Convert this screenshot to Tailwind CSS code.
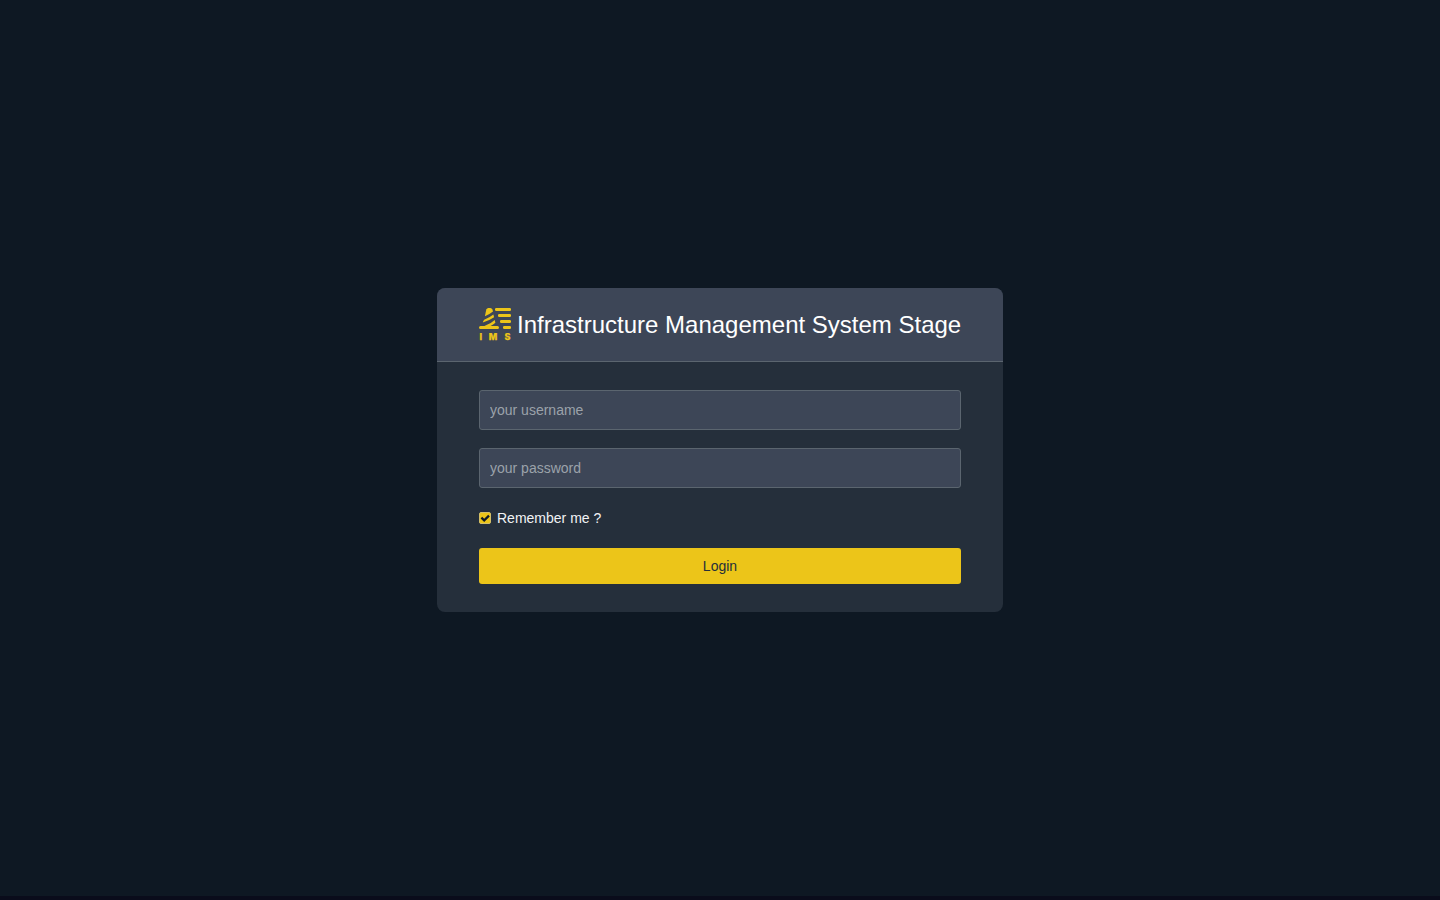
<!DOCTYPE html>
<html lang="en">
<head>
<meta charset="utf-8">
<title>Infrastructure Management System Stage</title>
<script src="https://cdn.jsdelivr.net/npm/@tailwindcss/browser@4"></script>
</head>
<body class="h-screen overflow-hidden bg-[#0a0c1b] font-['Liberation_Sans',Arial,sans-serif] text-sm text-white">
<div class="flex h-[896px] items-center justify-center bg-[#0e1823] pt-1">
  <main class="w-[566px] overflow-hidden rounded-lg bg-[#252f3b]">
    <header class="flex h-[74px] items-center gap-1.5 border-b border-[#5b656f] bg-[#3d4657] px-[42px]">
      <svg class="mb-px size-8 shrink-0 overflow-visible" viewBox="0 0 32 32" fill="#ecc519">
        <path d="M7.3 1.6Q7.9 0 9.4 0H11.4Q12.8 0 13.4 1.6L14 3.4Q10.5 6.2 5.9 8.2Z"/>
        <path d="M14.4 6.6L15.1 9.3Q11 12.2 3.8 14.6Q4.2 13 5.2 11.8Q10.4 9.8 14.4 6.6Z"/>
        <path d="M15.7 12L16.4 14.8Q14.2 16.7 11.6 18H18.5A1.5 1.5 0 0 1 18.5 21H1.5A1.5 1.5 0 0 1 1.5 18H5.4Q11.8 15.8 15.7 12Z"/>
        <rect x="16" y="0" width="16" height="3" rx="1.3"/>
        <rect x="19" y="6" width="13" height="3" rx="1.3"/>
        <rect x="21" y="12" width="11" height="3" rx="1.3"/>
        <rect x="24" y="18" width="8" height="3" rx="1.3"/>
        <g class="font-[Inter,sans-serif] text-[9px] leading-none font-extrabold" stroke="#ecc519" stroke-width="0.25">
          <text x="0.5" y="32">I</text>
          <text x="9.7" y="32">M</text>
          <text x="25.4" y="32">S</text>
        </g>
      </svg>
      <h1 class="text-2xl whitespace-nowrap">Infrastructure Management System Stage</h1>
    </header>
    <form class="flex flex-col px-[42px] py-7">
      <input type="text" placeholder="your username" class="h-10 rounded-[3px] border border-[#5b656f] bg-[#3d4657] px-2.5 placeholder:text-[#9ba2aa]">
      <input type="password" placeholder="your password" class="mt-[18px] h-10 rounded-[3px] border border-[#5b656f] bg-[#3d4657] px-2.5 placeholder:text-[#9ba2aa]">
      <label class="mt-5 flex h-5 items-center gap-1.5 text-[#f1f3f5]">
        <span class="flex size-3 items-center justify-center rounded-[2px] border border-[#d3bf68] bg-[#ecc519]">
          <svg class="size-3 shrink-0" viewBox="0 0 12 12" fill="none" stroke="#101a26" stroke-width="2.2"><path d="M2.4 5.6L5.2 8.4L10 3.6"/></svg>
        </span>
        Remember me ?
      </label>
      <button type="button" class="mt-5 h-9 rounded-[3px] bg-[#ecc519] text-[#252f3b]">Login</button>
    </form>
  </main>
</div>
</body>
</html>
